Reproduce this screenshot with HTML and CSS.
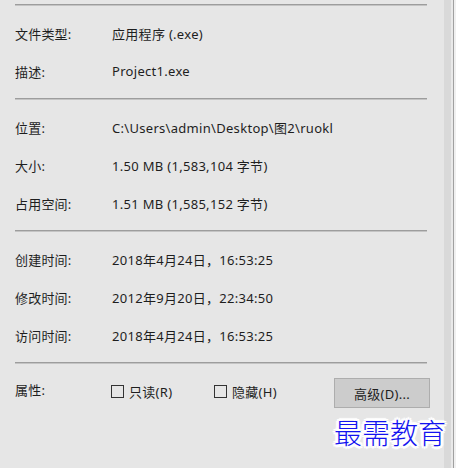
FILE: index.html
```html
<!DOCTYPE html>
<html lang="zh-CN">
<head>
<meta charset="utf-8">
<link rel="stylesheet" href="styles.css">
</head>
<body>
<div class="window">
  <div class="panel">
    <div class="sep"></div>
    <div class="section">
      <div class="row"><span class="label">文件类型:</span><span class="value">应用程序 (.exe)</span></div>
      <div class="row"><span class="label">描述:</span><span class="value">Project1.exe</span></div>
    </div>
    <div class="sep"></div>
    <div class="section">
      <div class="row"><span class="label">位置:</span><span class="value">C:\Users\admin\Desktop\图2\ruokl</span></div>
      <div class="row"><span class="label">大小:</span><span class="value">1.50 MB (1,583,104 字节)</span></div>
      <div class="row"><span class="label">占用空间:</span><span class="value">1.51 MB (1,585,152 字节)</span></div>
    </div>
    <div class="sep"></div>
    <div class="section">
      <div class="row"><span class="label">创建时间:</span><span class="value">2018年4月24日，16:53:25</span></div>
      <div class="row"><span class="label">修改时间:</span><span class="value">2012年9月20日，22:34:50</span></div>
      <div class="row"><span class="label">访问时间:</span><span class="value">2018年4月24日，16:53:25</span></div>
    </div>
    <div class="sep"></div>
    <div class="section attrs">
      <span class="label">属性:</span>
      <label class="check c1"><span class="box"></span>只读(R)</label>
      <label class="check c2"><span class="box"></span>隐藏(H)</label>
      <button class="btn">高级(D)...</button>
    </div>
    <div class="watermark">最需教育</div>
  </div>
  <div class="edge">
    <div class="band"></div>
    <div class="gap"></div>
    <div class="line"></div>
    <div class="outer"></div>
  </div>
</div>
</body>
</html>
```
FILE: styles.css
```css
html, body {
  margin: 0;
  padding: 0;
}
body {
  background: #e6e6e6;
  font-family: "Noto Sans", "Noto Sans CJK SC", sans-serif;
  font-size: 13px;
  color: #1e1e1e;
}
.window {
  display: flex;
  width: 456px;
  height: 468px;
  overflow: hidden;
}
.panel {
  position: relative;
  width: 444px;
  padding-top: 4px;
  box-sizing: border-box;
}
.sep {
  margin-left: 15px;
  width: 412px;
  height: 1px;
  background: #9d9d9d;
  box-shadow: 0 1px 0 #c4c4c4;
}
.section {
  padding: 9px 0 8px 15px;
}
.row {
  display: flex;
  align-items: center;
  height: 38px;
}
.label {
  width: 97px;
  flex: none;
  letter-spacing: 0.2px;
}
.value {
  white-space: nowrap;
  letter-spacing: 0.3px;
}
.attrs {
  display: flex;
  align-items: center;
  height: 38px;
  padding-bottom: 0;
}
.attrs .label {
  width: 96px;
  margin-top: -4px;
}
.check {
  display: flex;
  align-items: center;
  gap: 5px;
  letter-spacing: 0.3px;
}
.c1 {
  width: 103px;
}
.c2 {
  width: 120px;
}
.box {
  width: 11px;
  height: 11px;
  border: 1px solid #333;
  background: #e6e6e6;
}
.btn {
  width: 96px;
  height: 30px;
  margin-top: 4px;
  background: #cccccc;
  border: 1px solid #adadad;
  font: inherit;
  color: #1e1e1e;
  padding: 0;
  letter-spacing: 0.3px;
}
.watermark {
  position: absolute;
  left: 334px;
  top: 412px;
  white-space: nowrap;
  font-family: "Noto Sans CJK SC", sans-serif;
  font-size: 28px;
  font-weight: 300;
  color: #1313f0;
  text-shadow:
    2px 0 0 #fff, -2px 0 0 #fff, 0 2px 0 #fff, 0 -2px 0 #fff,
    2px 2px 0 #fff, -2px -2px 0 #fff, 2px -2px 0 #fff, -2px 2px 0 #fff,
    3px 0 1px #fff, -3px 0 1px #fff, 0 3px 1px #fff, 0 -3px 1px #fff;
}
.edge {
  display: flex;
  flex: 1;
}
.band {
  width: 7px;
  background: #d9d9d9;
}
.gap {
  width: 2px;
  background: #e9e9e9;
}
.line {
  width: 1px;
  background: #a0a0a0;
}
.outer {
  flex: 1;
  background: #f0f0f0;
}
```
